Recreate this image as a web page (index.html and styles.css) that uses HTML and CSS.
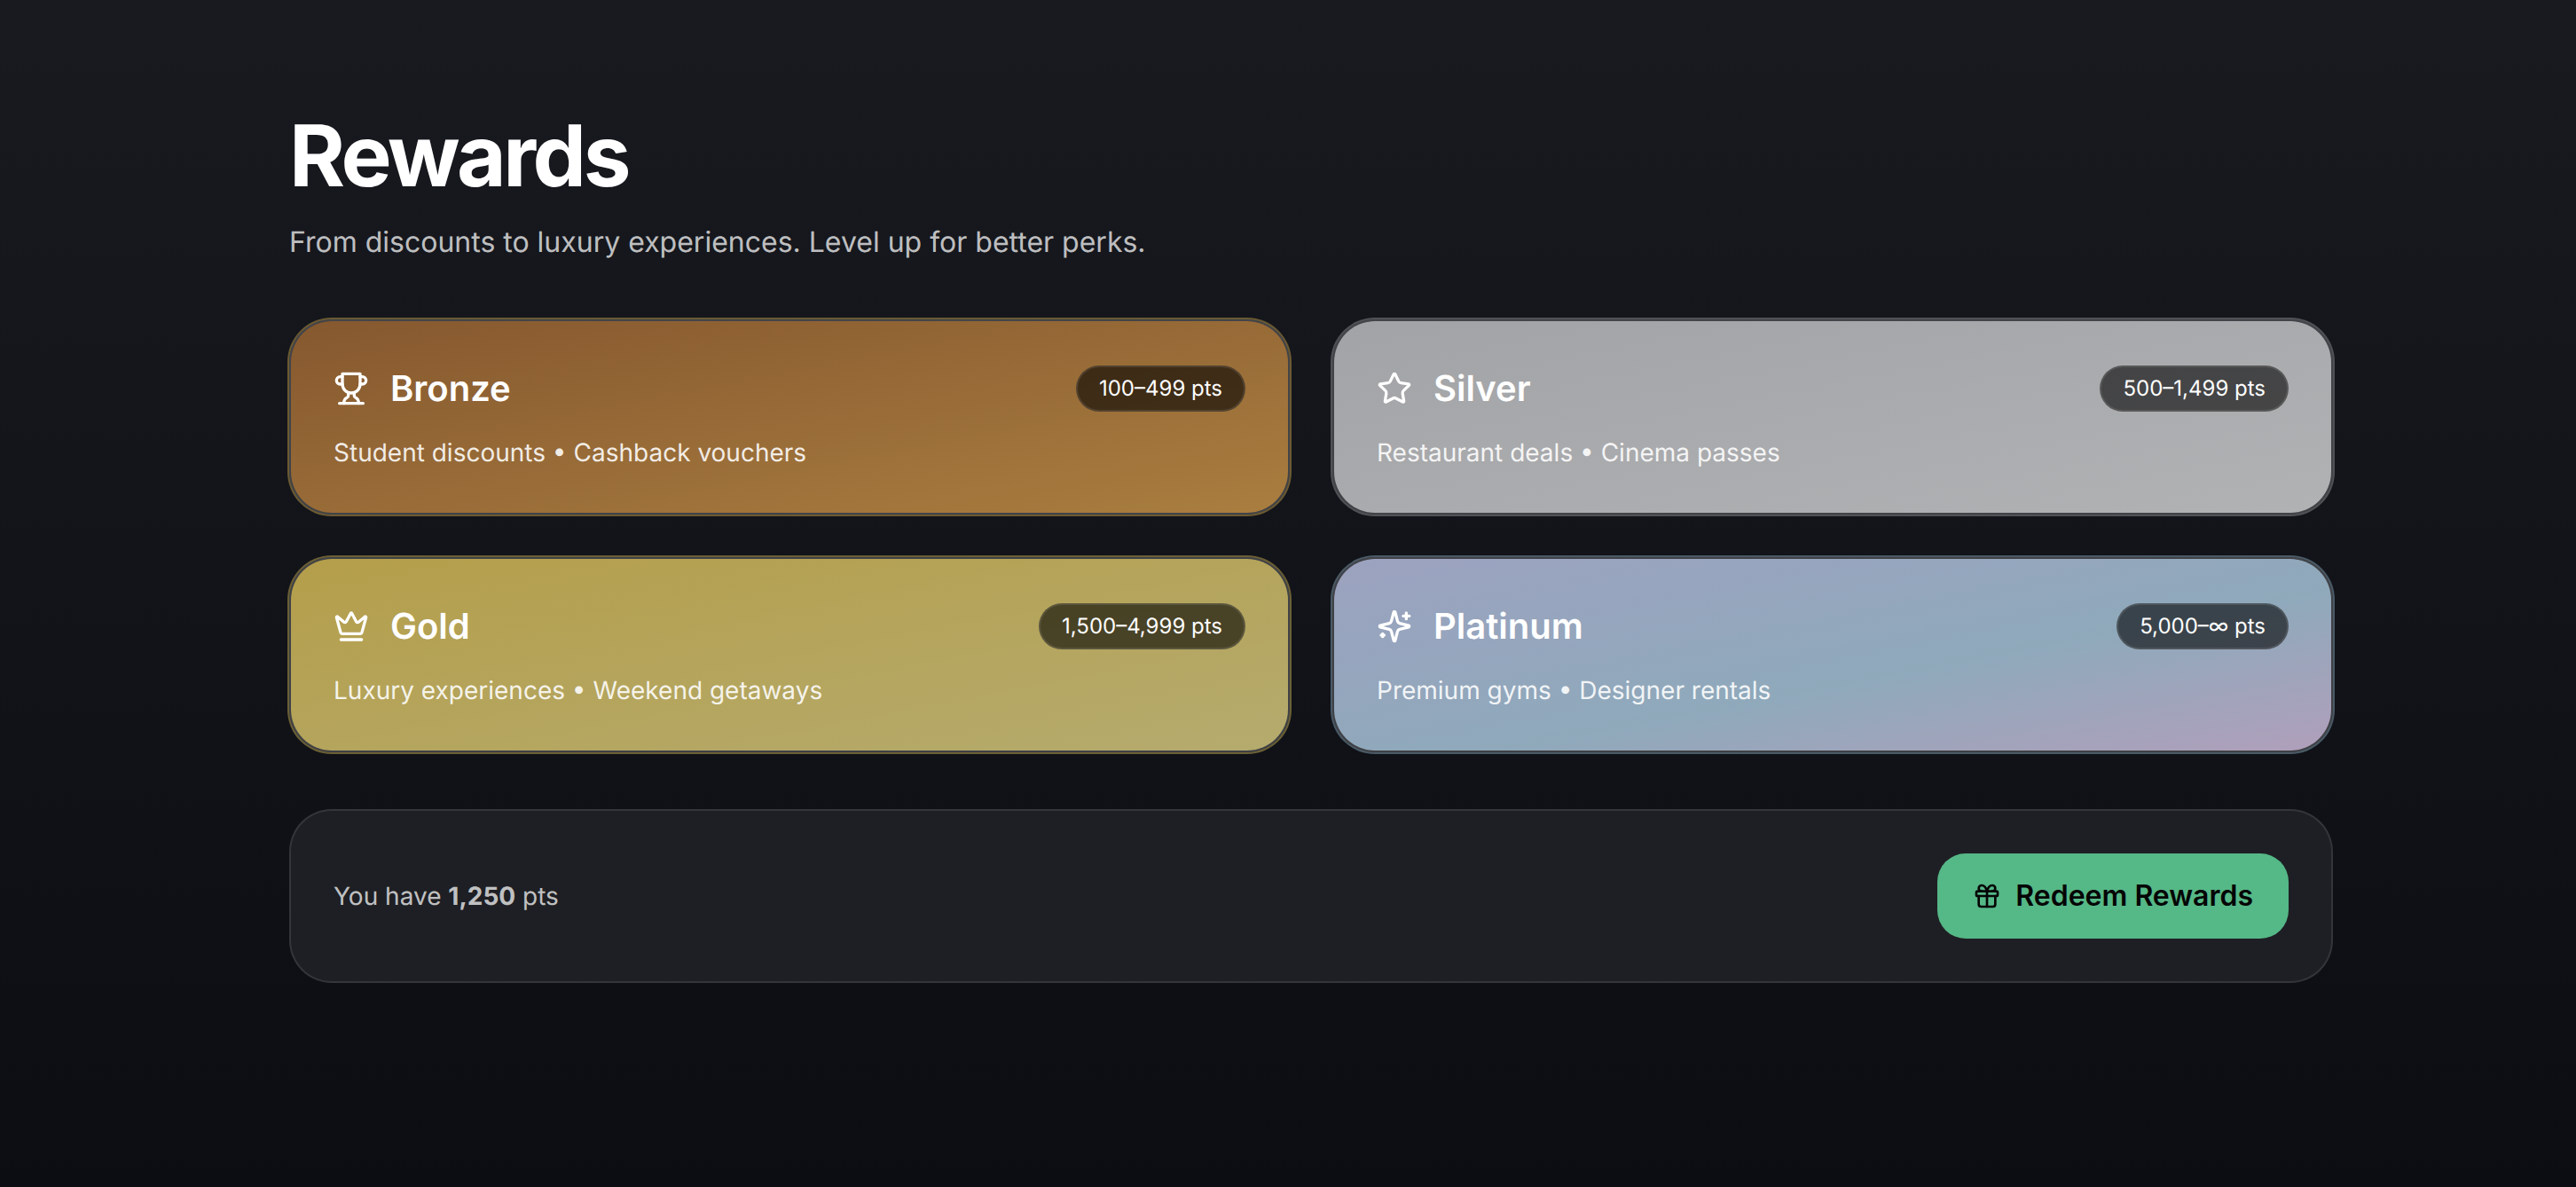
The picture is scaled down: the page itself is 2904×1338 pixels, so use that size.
FILE: index.html
```html
<!DOCTYPE html>
<html lang="en">
<head>
<meta charset="utf-8">
<title>Rewards</title>
<link rel="stylesheet" href="styles.css">
</head>
<body>
<main class="page">
  <header class="head">
    <h1 class="title">Rewards</h1>
    <p class="subtitle">From discounts to luxury experiences. Level up for better perks.</p>
  </header>
  <section class="tiers">
    <article class="tier bronze">
      <div class="tier-top">
        <div class="tier-name">
          <svg class="icon" viewBox="0 0 24 24"><path d="M6 9H4.5a2.5 2.5 0 0 1 0-5H6"/><path d="M18 9h1.5a2.5 2.5 0 0 0 0-5H18"/><path d="M4 22h16"/><path d="M10 14.66V17c0 .55-.47.98-.97 1.21C7.85 18.75 7 20.24 7 22"/><path d="M14 14.66V17c0 .55.47.98.97 1.21C16.15 18.75 17 20.24 17 22"/><path d="M18 2H6v7a6 6 0 0 0 12 0V2Z"/></svg>
          <h2 class="tier-title">Bronze</h2>
        </div>
        <span class="badge">100–499 pts</span>
      </div>
      <p class="perks">Student discounts • Cashback vouchers</p>
    </article>
    <article class="tier silver">
      <div class="tier-top">
        <div class="tier-name">
          <svg class="icon" viewBox="0 0 24 24"><path d="M11.525 2.295a.53.53 0 0 1 .95 0l2.31 4.679a2.123 2.123 0 0 0 1.595 1.16l5.166.756a.53.53 0 0 1 .294.904l-3.736 3.638a2.123 2.123 0 0 0-.611 1.878l.882 5.14a.53.53 0 0 1-.771.56l-4.618-2.428a2.122 2.122 0 0 0-1.973 0L6.396 21.01a.53.53 0 0 1-.77-.56l.881-5.139a2.122 2.122 0 0 0-.611-1.879L2.16 9.795a.53.53 0 0 1 .294-.906l5.165-.755a2.122 2.122 0 0 0 1.597-1.16z"/></svg>
          <h2 class="tier-title">Silver</h2>
        </div>
        <span class="badge">500–1,499 pts</span>
      </div>
      <p class="perks">Restaurant deals • Cinema passes</p>
    </article>
    <article class="tier gold">
      <div class="tier-top">
        <div class="tier-name">
          <svg class="icon" viewBox="0 0 24 24"><path d="M11.562 3.266a.5.5 0 0 1 .876 0L15.39 8.87a1 1 0 0 0 1.516.294L21.183 5.5a.5.5 0 0 1 .798.519l-2.834 10.246a1 1 0 0 1-.956.734H5.81a1 1 0 0 1-.957-.734L2.02 6.02a.5.5 0 0 1 .798-.519l4.276 3.664a1 1 0 0 0 1.516-.294z"/><path d="M5 21h14"/></svg>
          <h2 class="tier-title">Gold</h2>
        </div>
        <span class="badge">1,500–4,999 pts</span>
      </div>
      <p class="perks">Luxury experiences • Weekend getaways</p>
    </article>
    <article class="tier platinum">
      <div class="tier-top">
        <div class="tier-name">
          <svg class="icon" viewBox="0 0 24 24"><path d="M9.937 15.5A2 2 0 0 0 8.5 14.063l-6.135-1.582a.5.5 0 0 1 0-.962L8.5 9.936A2 2 0 0 0 9.937 8.5l1.582-6.135a.5.5 0 0 1 .963 0L14.063 8.5A2 2 0 0 0 15.5 9.937l6.135 1.581a.5.5 0 0 1 0 .964L15.5 14.063a2 2 0 0 0-1.437 1.437l-1.582 6.135a.5.5 0 0 1-.963 0z"/><path d="M20 3v4"/><path d="M22 5h-4"/><path d="M4 17v2"/><path d="M5 18H3"/></svg>
          <h2 class="tier-title">Platinum</h2>
        </div>
        <span class="badge">5,000–∞ pts</span>
      </div>
      <p class="perks">Premium gyms • Designer rentals</p>
    </article>
  </section>
  <section class="balance">
    <p class="balance-text">You have <strong class="balance-num">1,250</strong> pts</p>
    <button class="redeem" type="button">
      <svg class="icon-small" viewBox="0 0 24 24"><rect x="3" y="8" width="18" height="4" rx="1"/><path d="M12 8v13"/><path d="M19 12v7a2 2 0 0 1-2 2H7a2 2 0 0 1-2-2v-7"/><path d="M7.5 8a2.5 2.5 0 0 1 0-5A4.8 8 0 0 1 12 8a4.8 8 0 0 1 4.5-5 2.5 2.5 0 0 1 0 5"/></svg>
      Redeem Rewards
    </button>
  </section>
</main>
</body>
</html>
```
FILE: styles.css
```css
* { box-sizing: border-box; }
html, body { margin: 0; height: 100%; }
body {
  background: linear-gradient(180deg, #181a20 0%, #0b0d12 100%);
  color: #fff;
  font-family: Inter, "Noto Sans", sans-serif;
  text-rendering: geometricPrecision;
  -webkit-font-smoothing: antialiased;
}
.page { width: 2304px; margin-left: 326px; padding-top: 128px; }
.head { margin-bottom: 63px; }
.title { margin: 0; font-size: 96px; line-height: 96px; font-weight: 700; letter-spacing: -3.4px; }
.subtitle { margin: 25px 0 0; font-size: 32px; line-height: 48px; color: rgba(255,255,255,.74); }
.tiers { display: grid; grid-template-columns: 1fr 1fr; gap: 48px; }
.tier {
  height: 220px;
  padding: 48px;
  border-radius: 48px;
  border: 2px solid rgba(255,255,255,.2);
  background-clip: padding-box;
}
.bronze { background-image: linear-gradient(to bottom right, #86582f, #a97e3f); box-shadow: 0 0 0 2px #6b5a32; }
.silver { background-image: linear-gradient(to bottom right, #a2a3a6, #b1b2b4); box-shadow: 0 0 0 2px #505156; }
.gold { background-image: linear-gradient(to bottom right, #b49e4a, #b5ab6e); box-shadow: 0 0 0 2px #6b5f35; }
.platinum { background-image: linear-gradient(to bottom right, #9ca2bf, #8fa9bb 58%, #b09fbb); box-shadow: 0 0 0 2px #4a5a66; }
.tier-top { display: flex; align-items: center; justify-content: space-between; height: 56px; }
.tier-name { display: flex; align-items: center; gap: 24px; }
.icon, .icon-small { fill: none; stroke: currentColor; stroke-width: 2; stroke-linecap: round; stroke-linejoin: round; flex: none; }
.icon { width: 40px; height: 40px; }
.icon-small { width: 32px; height: 32px; }
.tier-title { margin: 0; font-size: 40px; line-height: 56px; font-weight: 600; }
.badge {
  padding: 8px 24px;
  border: 2px solid rgba(255,255,255,.1);
  border-radius: 999px;
  background: rgba(0,0,0,.6);
  font-size: 24px;
  line-height: 32px;
  font-weight: 400;
}
.perks { margin: 24px 0 0; font-size: 28px; line-height: 40px; color: rgba(255,255,255,.88); }
.balance {
  display: flex; align-items: center; justify-content: space-between;
  margin-top: 64px;
  padding: 48px;
  border: 2px solid rgba(255,255,255,.1);
  border-radius: 48px;
  background: #1e1f24;
}
.balance-text { margin: 0; font-size: 28px; line-height: 40px; color: rgba(255,255,255,.74); }
.balance-num { font-weight: 700; }
.redeem {
  display: flex; align-items: center; gap: 16px;
  height: 96px;
  padding: 0 40px;
  border: 0;
  border-radius: 32px;
  background: #55b887;
  color: #050505;
  font: 600 32px/48px Inter, sans-serif;
}
```
